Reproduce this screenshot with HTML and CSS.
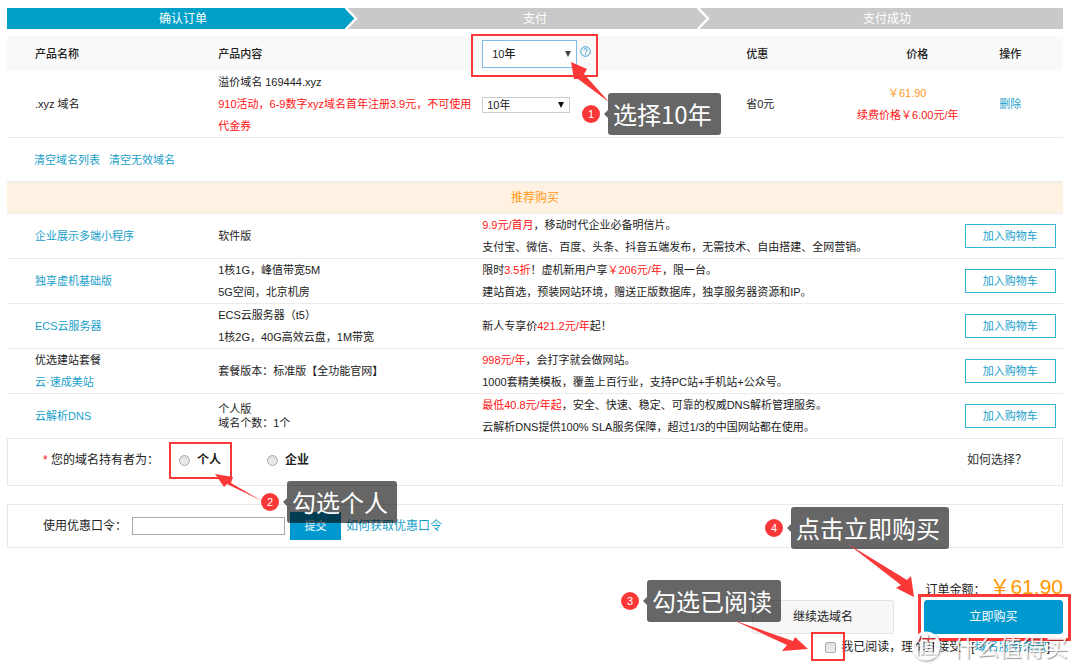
FILE: index.html
```html
<!DOCTYPE html>
<html lang="zh-CN">
<head>
<meta charset="utf-8">
<title>确认订单</title>
<link rel="stylesheet" href="styles.css">
</head>
<body>
<main class="page">
  <ol class="steps">
    <li class="step step-active">确认订单
      <svg class="step-arrow" width="14" height="21" viewBox="0 0 14 21" aria-hidden="true"><rect width="14" height="21" fill="#c9c9c9"/><path d="M0 0 11 10.5 0 21z" fill="#00a0c8"/><path d="M0-1 11 10.5 0 22" fill="none" stroke="#fff" stroke-width="2.500"/></svg>
    </li>
    <li class="step">支付
      <svg class="step-arrow" width="14" height="21" viewBox="0 0 14 21" aria-hidden="true"><path d="M0-1 11 10.5 0 22" fill="none" stroke="#fff" stroke-width="2.500"/></svg>
    </li>
    <li class="step">支付成功</li>
  </ol>

  <table class="order">
    <colgroup><col class="c-name"><col class="c-content"><col class="c-term"><col class="c-discount"><col class="c-price"><col class="c-action"></colgroup>
    <thead>
      <tr class="head">
        <th>产品名称</th>
        <th>产品内容</th>
        <th>
          <div class="term">
            <span class="select select-large"><select aria-label="全部年限"><option>10年</option></select></span>
            <svg class="help" width="11" height="11" viewBox="0 0 11 11" aria-label="帮助"><circle cx="5.500" cy="5.500" r="4.800" fill="none" stroke="#3a9fd0"/><path d="M3.800 4.300C3.800 2 7.300 2.100 7.200 4.200 7.100 5.300 5.500 5.300 5.500 6.700" fill="none" stroke="#3a9fd0"/><rect x="5" y="7.500" width="1" height="1.200" fill="#3a9fd0"/></svg>
          </div>
        </th>
        <th>优惠</th>
        <th class="price-head">价格</th>
        <th class="action">操作</th>
      </tr>
    </thead>
    <tbody>
      <tr>
        <td>.xyz 域名</td>
        <td>溢价域名 169444.xyz<br><span class="red">910活动，6-9数字xyz域名首年注册3.9元，不可使用<br>代金券</span></td>
        <td><span class="select"><select aria-label="购买年限"><option>10年</option></select></span></td>
        <td>省0元</td>
        <td class="price"><span class="orange">￥61.90</span><br><span class="red">续费价格￥6.00元/年</span></td>
        <td class="action"><a href="#">删除</a></td>
      </tr>
      <tr class="tools">
        <td colspan="6"><a href="#">清空域名列表</a><a href="#">清空无效域名</a></td>
      </tr>
    </tbody>
    <tbody class="offers">
      <tr class="band"><th colspan="6">推荐购买</th></tr>
      <tr>
        <td><a href="#">企业展示多端小程序</a></td>
        <td>软件版</td>
        <td colspan="3"><span class="red">9.9元/首月</span>，移动时代企业必备明信片。<br>支付宝、微信、百度、头条、抖音五端发布，无需技术、自由搭建、全网营销。</td>
        <td class="action"><button class="cart">加入购物车</button></td>
      </tr>
      <tr>
        <td><a href="#">独享虚机基础版</a></td>
        <td>1核1G，峰值带宽5M<br>5G空间，北京机房</td>
        <td colspan="3">限时<span class="red">3.5折</span>！虚机新用户享<span class="red">￥206元/年</span>，限一台。<br>建站首选，预装网站环境，赠送正版数据库，独享服务器资源和IP。</td>
        <td class="action"><button class="cart">加入购物车</button></td>
      </tr>
      <tr>
        <td><a href="#">ECS云服务器</a></td>
        <td>ECS云服务器（t5）<br>1核2G，40G高效云盘，1M带宽</td>
        <td colspan="3">新人专享价<span class="red">421.2元/年</span>起！</td>
        <td class="action"><button class="cart">加入购物车</button></td>
      </tr>
      <tr>
        <td>优选建站套餐<br><a href="#">云·速成美站</a></td>
        <td>套餐版本：标准版【全功能官网】</td>
        <td colspan="3"><span class="red">998元/年</span>，会打字就会做网站。<br>1000套精美模板，覆盖上百行业，支持PC站+手机站+公众号。</td>
        <td class="action"><button class="cart">加入购物车</button></td>
      </tr>
      <tr>
        <td><a href="#">云解析DNS</a></td>
        <td class="compact">个人版<br>域名个数：1个</td>
        <td colspan="3"><span class="red">最低40.8元/年起</span>，安全、快速、稳定、可靠的权威DNS解析管理服务。<br>云解析DNS提供100% SLA服务保障，超过1/3的中国网站都在使用。</td>
        <td class="action"><button class="cart">加入购物车</button></td>
      </tr>
    </tbody>
  </table>

  <section class="panel owner">
    <span class="owner-label"><span class="red">*</span> 您的域名持有者为：</span>
    <label class="choice"><input type="radio" name="owner">个人</label>
    <label class="choice"><input type="radio" name="owner">企业</label>
    <a class="owner-help" href="#">如何选择？</a>
  </section>

  <form class="panel coupon">
    <label for="code">使用优惠口令：</label>
    <input class="code" id="code" type="text">
    <button class="submit" type="button">提交</button>
    <a href="#">如何获取优惠口令</a>
  </form>

  <footer class="checkout">
    <div class="total"><span>订单金额：</span><strong>￥61.90</strong></div>
    <div class="buttons">
      <button class="continue">继续选域名</button>
      <button class="buy">立即购买</button>
    </div>
    <div class="terms"><label><input type="checkbox">我已阅读，理解并接受</label> <span>[<a href="#">域名服务条款</a>]</span></div>
  </footer>

  <div class="notes">
    <div class="frame frame-1"></div>
    <div class="frame frame-2"></div>
    <div class="frame frame-3"></div>
    <div class="frame frame-4"></div>
    <div class="note note-1"><b>1</b><span>选择10年</span></div>
    <div class="note note-2"><b>2</b><span>勾选个人</span></div>
    <div class="note note-3"><b>3</b><span>勾选已阅读</span></div>
    <div class="note note-4"><b>4</b><span>点击立即购买</span></div>
    <svg class="arrows" width="1080" height="672" viewBox="0 0 1080 672" fill="#fb3838" aria-hidden="true">
      <path d="M571 62 587 69 584 74 609 102 578 79 574 79z"/>
      <path d="M215 474 233 477 231 483 262 501 227 484 224 487z"/>
      <path d="M808 649 795 637 793 641 733 620 787 645 782 651z"/>
      <path d="M914 597 911 576 907 580 848 544 901 585 896 588z"/>
    </svg>
    <div class="watermark">
      <svg width="30" height="30" viewBox="0 0 30 30">
        <mask id="seal"><rect width="30" height="30" fill="#fff"/><text x="15" y="23" text-anchor="middle" font-size="22">值</text></mask>
        <circle cx="15" cy="15" r="14.500" fill="#fff" fill-opacity=".95" mask="url(#seal)"/>
      </svg>
      <span>什么值得买</span>
    </div>
  </div>
</main>
</body>
</html>
```
FILE: styles.css
```css
* { box-sizing: border-box; }
body {
  margin: 0;
  background: #fff;
  color: #222;
  font: 12px/22px "Liberation Sans", "Noto Sans CJK SC", sans-serif;
}
button, input, select { font: inherit; color: inherit; margin: 0; }
a { color: #1a9fca; text-decoration: none; }
.red { color: #ff1414; }
.orange { color: #ff9a1a; }
.page { position: relative; padding: 8px 17px 8px 7px; }

.steps {
  display: grid;
  grid-template-columns: repeat(3, 1fr);
  margin: 0 0 7px;
  padding: 0;
  list-style: none;
}
.step {
  position: relative;
  height: 21px;
  line-height: 22px;
  text-align: center;
  color: #fff;
  background: #c9c9c9;
}
.step-active { background: #00a0c8; }
.step-arrow { position: absolute; top: 0; right: 0; }

.order {
  width: 100%;
  table-layout: fixed;
  border-collapse: separate;
  border-spacing: 0;
  font-size: 11px;
}
.c-name { width: 20%; }
.c-content, .c-term { width: 25%; }
.c-discount { width: 10.5%; }
.c-price { width: 9.5%; }
.c-action { width: 10%; }
.order th, .order td {
  padding: 0;
  text-align: left;
  vertical-align: middle;
  white-space: nowrap;
  border-bottom: 1px solid #ebebeb;
}
.order th:first-child, .order td:first-child { padding-left: 28px; }
.order .head th {
  height: 35px;
  font-weight: 500;
  background: #f9f9f9;
  border-bottom: 0;
}
.order .price { text-align: center; }
.order .price-head { text-align: center; padding-left: 20px; }
.order .action { text-align: center; }
.order .tools td { height: 45px; padding-left: 27px; border-bottom: 2px solid #eee; }
.tools a { margin-right: 9px; }
.order .band th {
  height: 31px;
  padding: 0;
  text-align: center;
  font-size: 12px;
  font-weight: 400;
  color: #ff9a1a;
  background: #fff2e3;
}
.order .compact { line-height: 14px; }

.term { display: flex; align-items: center; gap: 3px; }
.help { margin-bottom: 4px; }
.select { position: relative; display: inline-block; width: 88px; height: 16px; vertical-align: middle; }
.select::after {
  content: "";
  position: absolute;
  top: 5px;
  right: 6px;
  border: 3px solid transparent;
  border-top: 6px solid #111;
  border-bottom: 0;
}
.select select {
  display: block;
  appearance: none;
  width: 100%;
  height: 100%;
  padding: 0 4px;
  line-height: 14px;
  background: #fff;
  border: 1px solid #ccc;
  border-radius: 0;
}
.select-large { width: 95px; height: 28px; }
.select-large::after { top: 11px; border-top-color: #444; }
.select-large select { padding: 0 9px; line-height: 26px; border-color: #7fbbe6; }

.cart {
  display: block;
  width: 91px;
  height: 24px;
  margin: 0 auto;
  padding: 0;
  line-height: 20px;
  color: #1a9fca;
  background: #fff;
  border: 1px solid #2fb5d6;
}

.panel { display: flex; align-items: center; padding: 0 35px; border: 1px solid #e8e8e8; }
.owner { height: 47px; margin-bottom: 18px; padding-bottom: 4px; border-top: 0; }
.owner-label { width: 136px; }
.choice { display: flex; align-items: center; width: 88px; font-weight: 700; }
.choice input, .terms input {
  appearance: none;
  width: 11px;
  height: 11px;
  margin-right: 7px;
  background: linear-gradient(#dedede, #eee);
  border: 1px solid #aaa;
}
.choice input { border-radius: 50%; }
.owner-help { margin-left: auto; color: #333; }
.coupon { height: 44px; gap: 5px; }
.code { width: 153px; height: 18px; padding: 0 4px; background: #fff; border: 1px solid #aaa; }
.submit { width: 51px; height: 28px; padding: 0; font-size: 11px; color: #fff; background: #0099cf; border: 0; }

.checkout { display: flex; flex-direction: column; align-items: flex-end; margin-top: 26px; }
.total { display: flex; align-items: baseline; height: 26px; line-height: 26px; gap: 4px; }
.total strong { font-size: 21px; font-weight: 400; color: #ff9900; }
.buttons { display: flex; gap: 30px; }
.continue, .buy { width: 142px; height: 34px; padding: 0; border: 1px solid #e2e2e2; border-radius: 3px; background: #f7f7f7; }
.buy { width: 139px; color: #fff; background: #0099cf; border-color: #0099cf; }
.terms { display: flex; gap: 10px; margin-top: 2px; padding-right: 13px; }
.terms label { display: flex; align-items: center; }
.terms input { border-radius: 2px; margin-right: 5px; }

/* Annotations drawn over the page */
.notes { position: absolute; inset: 0; pointer-events: none; }
.arrows { position: absolute; left: 0; top: 0; }
.frame { position: absolute; border: 2px solid #fb3838; }
.frame-1 { left: 471px; top: 34px; width: 127px; height: 43px; }
.frame-2 { left: 169px; top: 442px; width: 63px; height: 37px; }
.frame-3 { left: 811px; top: 632px; width: 34px; height: 29px; }
.frame-4 { left: 918px; top: 594px; width: 153px; height: 47px; border-width: 3px; }
.note { position: absolute; display: flex; align-items: center; gap: 8px; white-space: nowrap; }
.note b {
  width: 18px;
  height: 18px;
  border-radius: 50%;
  background: #fb3838;
  color: #fff;
  font-size: 11px;
  font-weight: 400;
  line-height: 18px;
  text-align: center;
}
.note span {
  position: relative;
  height: 42px;
  padding: 0 9px 0 5px;
  border-radius: 3px;
  background: rgba(0, 0, 0, .6);
  color: #fff;
  font: 24px/42px "Noto Sans CJK SC", sans-serif;
}
.note span::before {
  content: "";
  position: absolute;
  left: -4px;
  top: 17px;
  border: 4px solid transparent;
  border-right-color: rgba(0, 0, 0, .6);
  border-left: 0;
}
.note-1 { left: 582px; top: 93px; }
.note-2 { left: 261px; top: 481px; }
.note-3 { left: 621px; top: 580px; }
.note-4 { left: 765px; top: 507px; }
.watermark { position: absolute; left: 911px; top: 630px; display: flex; align-items: center; gap: 12px; }
.watermark svg { filter: drop-shadow(1px 1px 1px rgba(0, 0, 0, .4)); }
.watermark span {
  color: rgba(255, 255, 255, .9);
  font: 23px/32px "Noto Sans CJK SC", sans-serif;
  text-shadow: 1px 1px 1px rgba(0, 0, 0, .4);
}
```
